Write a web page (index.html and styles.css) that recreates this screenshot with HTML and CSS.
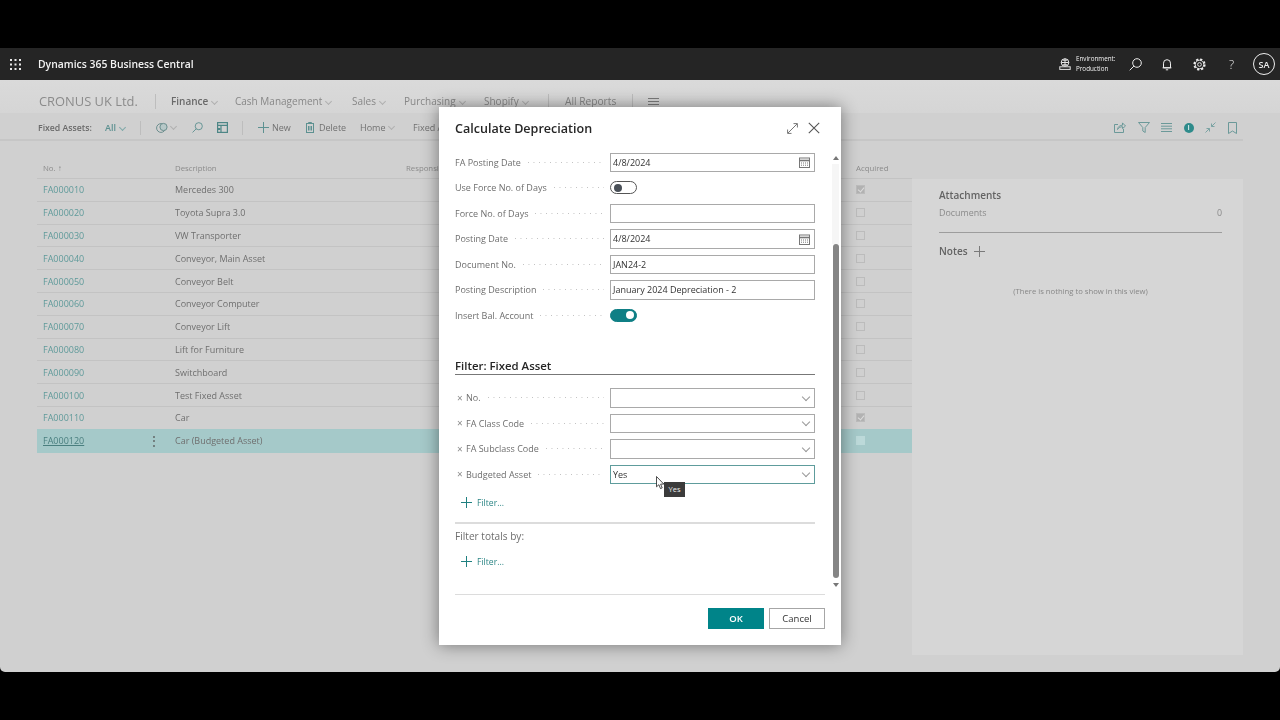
FILE: index.html
```html
<!DOCTYPE html>
<html lang="en">
<head>
<meta charset="utf-8">
<title>Calculate Depreciation</title>
<link rel="stylesheet" href="styles.css">
</head>
<body>
<div class="app">
  <header class="topbar">
    <svg class="waffle" viewBox="0 0 11 11" width="11" height="11"><g fill="#e8e8e8"><rect x="0" y="0" width="2" height="2"/><rect x="4.5" y="0" width="2" height="2"/><rect x="9" y="0" width="2" height="2"/><rect x="0" y="4.5" width="2" height="2"/><rect x="4.5" y="4.5" width="2" height="2"/><rect x="9" y="4.5" width="2" height="2"/><rect x="0" y="9" width="2" height="2"/><rect x="4.5" y="9" width="2" height="2"/><rect x="9" y="9" width="2" height="2"/></g></svg>
    <span class="product">Dynamics 365 Business Central</span>
    <div class="top-right">
      <svg class="env-icon" viewBox="0 0 12 12" width="12" height="12" fill="none" stroke="#e6e6e6" stroke-width="1"><circle cx="6" cy="4.5" r="3.8"/><path d="M2.2 4.5h7.6M6 .7v7.6M3.6 2.2h4.8M3.6 6.8h4.8"/><rect x=".8" y="8.8" width="10.4" height="2.6" fill="#252525"/></svg>
      <div class="env-text"><span>Environment:</span><span>Production</span></div>
      <svg class="ti ti-search" viewBox="0 0 13 13" width="13" height="13" fill="none" stroke="#eee" stroke-width="1"><circle cx="8" cy="5" r="4.3"/><path d="M4.9 8.1.7 12.3"/></svg>
      <svg class="ti ti-bell" viewBox="0 0 12 13" width="12" height="13" fill="none" stroke="#eee" stroke-width="1"><path d="M2.5 9.8V5.2a3.5 3.5 0 0 1 7 0v4.6zM1.6 9.8h8.8M4.8 11.8h2.4"/></svg>
      <svg class="ti ti-gear" viewBox="0 0 14 14" width="13" height="13" fill="none" stroke="#eee"><circle cx="7" cy="7" r="2"/><circle cx="7" cy="7" r="4.6"/><circle cx="7" cy="7" r="5.6" stroke-width="2" stroke-dasharray="2.4 2"/></svg>
      <span class="ti-help">?</span>
      <span class="avatar">SA</span>
    </div>
  </header>

  <nav class="nav">
    <span class="company">CRONUS UK Ltd.</span>
    <i class="vsep vsep-company"></i>
    <span class="nav-item nav-active">Finance<i class="chev"></i></span>
    <span class="nav-item nav-cash">Cash Management<i class="chev"></i></span>
    <span class="nav-item nav-sales">Sales<i class="chev"></i></span>
    <span class="nav-item nav-purch">Purchasing<i class="chev"></i></span>
    <span class="nav-item nav-shop">Shopify<i class="chev"></i></span>
    <i class="vsep vsep-shop"></i>
    <span class="nav-item nav-reports">All Reports</span>
    <i class="vsep vsep-reports"></i>
    <svg class="nav-menu" viewBox="0 0 11 7" width="11" height="7" stroke="#7c7c7c" stroke-width="1"><path d="M0 .5h11M0 3.5h11M0 6.5h11"/></svg>
  </nav>

  <div class="actions">
    <strong class="act-title">Fixed Assets:</strong>
    <span class="act-all">All<i class="chev chev-teal"></i></span>
    <i class="vsep vsep-act1"></i>
    <svg class="act-ic ic-filterpane" viewBox="0 0 12 12" width="12" height="12" fill="none" stroke="#6b8e8e" stroke-width="1"><circle cx="5" cy="6" r="4.4"/><circle cx="7.5" cy="5" r="3.6" fill="#b7c8c8"/></svg>
    <i class="chev chev-gap"></i>
    <svg class="act-ic ic-search" viewBox="0 0 12 12" width="11" height="11" fill="none" stroke="#5d9191" stroke-width="1"><circle cx="7.4" cy="4.6" r="3.9"/><path d="M4.6 7.4.6 11.4"/></svg>
    <svg class="act-ic ic-page" viewBox="0 0 11 11" width="11" height="11" fill="none" stroke="#4d8686" stroke-width="1.2"><rect x=".6" y=".6" width="9.8" height="9.8"/><path d="M.6 3.4h9.8M4 3.4v7" /><path d="M1 7h2.4" stroke-width="2"/></svg>
    <i class="vsep vsep-act2"></i>
    <span class="act-btn act-new"><svg viewBox="0 0 11 11" width="11" height="11" stroke="#5d9191" stroke-width="1"><path d="M5.5 0v11M0 5.5h11"/></svg>New</span>
    <span class="act-btn act-del"><svg viewBox="0 0 8 11" width="8" height="11" fill="none" stroke="#5d9191" stroke-width="1"><rect x=".5" y="1.5" width="7" height="9"/><path d="M2.5 1V.5h3V1M2.5 4v4.5M4 4v4.5M5.5 4v4.5"/></svg>Delete</span>
    <span class="act-btn act-home">Home<i class="chev"></i></span>
    <span class="act-btn act-fixed">Fixed A</span>
    <div class="act-right">
      <svg viewBox="0 0 12 11" width="12" height="11" fill="none" stroke="#6b9999" stroke-width="1"><path d="M4 2.5H.5v8h9V7"/><path d="M3.5 7.5c.5-3 2.5-4.3 5-4.3V.9L11.5 4 8.500 6.600V4.700C6.500 4.700 4.800 5.500 3.500 7.500z"/></svg>
      <svg viewBox="0 0 12 11" width="12" height="11" fill="none" stroke="#6b9999" stroke-width="1"><path d="M.5.500h11L7.200 5.500v5L4.800 9V5.500z"/></svg>
      <svg viewBox="0 0 11 9" width="11" height="9" stroke="#6b9999" stroke-width="1"><path d="M0 .5h11M0 3.200h11M0 5.800h11M0 8.500h11"/></svg>
      <span class="info-dot">i</span>
      <svg viewBox="0 0 11 11" width="11" height="11" fill="none" stroke="#7ba3a3" stroke-width="1"><path d="M6.500 4.500 10.500.5M6.500 1.500v3h3M4.500 6.500.5 10.500M1.500 6.500h3v3"/></svg>
      <svg viewBox="0 0 9 12" width="9" height="12" fill="none" stroke="#6b9999" stroke-width="1"><path d="M.5.500h8v11l-4-2.500-4 2.500z"/></svg>
    </div>
  </div>

  <main class="content">
    <section class="list">
      <div class="row row-head"><span class="c-no">No. <b class="arrow">↑</b></span><span>Description</span><span>Responsi</span><span>Acquired</span></div>
      <div class="row"><a class="c-no">FA000010</a><span>Mercedes 300</span><span></span><i class="cb cb-on"></i></div>
      <div class="row"><a class="c-no">FA000020</a><span>Toyota Supra 3.0</span><span></span><i class="cb"></i></div>
      <div class="row"><a class="c-no">FA000030</a><span>VW Transporter</span><span></span><i class="cb"></i></div>
      <div class="row"><a class="c-no">FA000040</a><span>Conveyor, Main Asset</span><span></span><i class="cb"></i></div>
      <div class="row"><a class="c-no">FA000050</a><span>Conveyor Belt</span><span></span><i class="cb"></i></div>
      <div class="row"><a class="c-no">FA000060</a><span>Conveyor Computer</span><span></span><i class="cb"></i></div>
      <div class="row"><a class="c-no">FA000070</a><span>Conveyor Lift</span><span></span><i class="cb"></i></div>
      <div class="row"><a class="c-no">FA000080</a><span>Lift for Furniture</span><span></span><i class="cb"></i></div>
      <div class="row"><a class="c-no">FA000090</a><span>Switchboard</span><span></span><i class="cb"></i></div>
      <div class="row"><a class="c-no">FA000100</a><span>Test Fixed Asset</span><span></span><i class="cb"></i></div>
      <div class="row"><a class="c-no">FA000110</a><span>Car</span><span></span><i class="cb cb-on"></i></div>
      <div class="row row-sel"><a class="c-no">FA000120<span class="dots">⋮</span></a><span>Car (Budgeted Asset)</span><span></span><i class="cb"></i></div>
    </section>
    <aside class="side">
      <h3 class="side-h">Attachments</h3>
      <div class="side-doc"><span>Documents</span><span>0</span></div>
      <div class="side-notes"><h3 class="side-h">Notes</h3><svg viewBox="0 0 11 11" width="11" height="11" stroke="#7a7a7a" stroke-width="1"><path d="M5.500 0v11M0 5.500h11"/></svg></div>
      <p class="side-empty">(There is nothing to show in this view)</p>
    </aside>
  </main>
</div>

<div class="dialog">
  <div class="dlg-head">
    <h2 class="dlg-title">Calculate Depreciation</h2>
    <svg class="dlg-expand" viewBox="0 0 11 11" width="11" height="11" fill="none" stroke="#777" stroke-width="1"><path d="M.8 10.200 10.200.8M6.500.6h3.900v3.900M.6 6.500v3.900h3.900"/></svg>
    <svg class="dlg-close" viewBox="0 0 12 12" width="12" height="12" stroke="#555" stroke-width="1.100"><path d="M.8.800l10.400 10.400M11.200.800.800 11.200"/></svg>
  </div>
  <div class="dlg-body">
    <div class="form">
      <div class="fld"><label class="lbl"><span>FA Posting Date</span><i class="lead"></i></label><div class="inp">4/8/2024<svg class="cal" viewBox="0 0 11 11" width="11" height="11" fill="none" stroke="#777"><rect x=".5" y="1" width="10" height="9.500"/><path d="M.5 3.500h10" stroke-width="1.600"/><path d="M2 6h7M2 8.200h7" stroke-dasharray="1 1"/></svg></div></div>
      <div class="fld"><label class="lbl"><span>Use Force No. of Days</span><i class="lead"></i></label><span class="tog"><i></i></span></div>
      <div class="fld"><label class="lbl"><span>Force No. of Days</span><i class="lead"></i></label><div class="inp"></div></div>
      <div class="fld"><label class="lbl"><span>Posting Date</span><i class="lead"></i></label><div class="inp">4/8/2024<svg class="cal" viewBox="0 0 11 11" width="11" height="11" fill="none" stroke="#777"><rect x=".5" y="1" width="10" height="9.500"/><path d="M.5 3.500h10" stroke-width="1.600"/><path d="M2 6h7M2 8.200h7" stroke-dasharray="1 1"/></svg></div></div>
      <div class="fld"><label class="lbl"><span>Document No.</span><i class="lead"></i></label><div class="inp">JAN24-2</div></div>
      <div class="fld"><label class="lbl"><span>Posting Description</span><i class="lead"></i></label><div class="inp">January 2024 Depreciation - 2</div></div>
      <div class="fld"><label class="lbl"><span>Insert Bal. Account</span><i class="lead"></i></label><span class="tog tog-on"><i></i></span></div>

      <h3 class="filter-h">Filter: Fixed Asset</h3>
      <div class="fld"><label class="lbl"><em class="x">×</em><span>No.</span><i class="lead"></i></label><div class="inp"><i class="chev chev-inp"></i></div></div>
      <div class="fld"><label class="lbl"><em class="x">×</em><span>FA Class Code</span><i class="lead"></i></label><div class="inp"><i class="chev chev-inp"></i></div></div>
      <div class="fld"><label class="lbl"><em class="x">×</em><span>FA Subclass Code</span><i class="lead"></i></label><div class="inp"><i class="chev chev-inp"></i></div></div>
      <div class="fld"><label class="lbl"><em class="x">×</em><span>Budgeted Asset</span><i class="lead"></i></label><div class="inp inp-focus">Yes<i class="chev chev-inp"></i>
        <span class="tip">Yes</span>
        <svg class="cursor" viewBox="0 0 9 14" width="9" height="14"><path d="M.5.500v10.300l2.400-2.100 1.600 3.900 1.700-.7-1.600-3.800h3.200z" fill="#fff" stroke="#222" stroke-width=".8"/></svg>
      </div></div>
      <div class="add-filter add-1"><svg viewBox="0 0 11 11" width="11" height="11" stroke="#1f8080" stroke-width="1"><path d="M5.500 0v11M0 5.500h11"/></svg>Filter...</div>
      <hr class="form-div">
      <div class="totals">Filter totals by:</div>
      <div class="add-filter add-2"><svg viewBox="0 0 11 11" width="11" height="11" stroke="#1f8080" stroke-width="1"><path d="M5.500 0v11M0 5.500h11"/></svg>Filter...</div>
    </div>
    <div class="scroll">
      <i class="sc-up"></i>
      <i class="sc-track"></i>
      <i class="sc-thumb"></i>
      <i class="sc-down"></i>
    </div>
  </div>
  <div class="dlg-foot">
    <button class="btn btn-ok">OK</button>
    <button class="btn">Cancel</button>
  </div>
</div>
</body>
</html>
```

FILE: styles.css
```css
* { box-sizing: border-box; }
html, body { margin: 0; height: 720px; overflow: hidden; }
body { background: #000; font-family: "Open Sans", "Liberation Sans", sans-serif; font-size: 9px; color: #6c6c6c; position: relative; }
i, em { font-style: normal; }
svg { display: block; flex: none; }

.app { margin-top: 48px; position: absolute; left: 0; right: 0; top: 0; height: 624px; background: #d0d0d0; border-radius: 0 0 5px 5px; display: flex; flex-direction: column; overflow: hidden; filter: blur(.35px); }

.topbar { height: 32px; flex: none; background: #252525; display: flex; align-items: center; padding-left: 10px; color: #f2f2f2; }
.waffle { margin: 0 16px 0 0; }
.product { font-size: 10.4px; font-weight: 600; margin-left: 1px; }
.top-right { margin-left: auto; display: flex; align-items: center; padding-right: 5px; }
.env-icon { margin-right: 5px; }
.env-text { display: flex; flex-direction: column; font-size: 6.3px; line-height: 10px; width: 53px; }
.ti-bell { margin-left: 19px; }
.ti-gear { margin-left: 20px; }
.ti-search { margin-left: 0; }
.ti-help { width: 13px; margin-left: 19px; text-align: center; font-size: 12px; color: #eee; font-weight: 300; }
.avatar { width: 22px; height: 22px; margin-left: 15px; border: 1px solid #eee; border-radius: 50%; display: flex; align-items: center; justify-content: center; font-size: 9px; font-weight: 600; color: #eee; }

.chev { display: inline-block; width: 5px; height: 5px; border-right: 1px solid #b0b0b0; border-bottom: 1px solid #b0b0b0; transform: rotate(45deg); margin: 0 0 2px 4px; vertical-align: middle; }
.chev-teal { border-color: #7fa9a9; }
.vsep { display: block; width: 1px; height: 15px; background: #bdbdbd; flex: none; }

.nav { height: 33px; flex: none; background: linear-gradient(#dadada, #d5d5d5); display: flex; align-items: center; padding-left: 39px; padding-top: 9px; font-size: 10px; color: #878787; }
.company { font-size: 12.900px; color: #8b8b8b; width: 116px; white-space: nowrap; }
.vsep-company { margin-right: 15px; }
.nav-item { white-space: nowrap; }
.nav-active { font-weight: 600; color: #6a6a6a; width: 64px; }
.nav-cash { width: 117px; }
.nav-sales { width: 52px; }
.nav-purch { width: 80px; }
.nav-shop { width: 64px; }
.vsep-shop { margin-right: 16px; }
.nav-reports { width: 67px; font-size: 10.200px; }
.nav-menu { margin-left: 15px; }

.actions { height: 28px; flex: none; margin-right: 37px; padding: 3px 0 0 38px; display: flex; align-items: center; border-bottom: 2px solid #c6c6c6; font-size: 9px; color: #717171; }
.act-title { font-weight: 600; font-size: 8.700px; width: 67px; white-space: nowrap; color: #6a6a6a; }
.act-all { color: #5d9191; font-weight: 600; width: 35px; }
.ic-filterpane { margin-left: 15px; }
.chev-gap { margin: 0 0 2px 3px; }
.ic-search { margin-left: 16px; }
.ic-page { margin-left: 14px; }
.vsep-act1 { height: 14px; }
.vsep-act2 { height: 14px; margin-left: 14px; }
.act-btn { display: inline-flex; align-items: center; white-space: nowrap; }
.act-new { margin-left: 15px; gap: 3px; width: 48px; }
.act-del { gap: 5px; width: 54px; }
.act-home { width: 53px; }
.act-right { margin-left: auto; display: flex; align-items: center; gap: 11.500px; padding-right: 6.500px; }
.info-dot { width: 10px; height: 10px; border-radius: 50%; background: #2e8b8b; color: #d0e6e6; font-size: 7px; line-height: 10px; text-align: center; font-weight: 700; }

.content { flex: 1; display: flex; padding: 0 37px 17px; min-height: 0; }
.list { width: 875px; flex: none; }
.row { display: grid; grid-template-columns: 138px 231px 1fr 56px; height: 22.800px; align-items: center; border-bottom: 1px solid #c3c3c3; font-size: 9px; color: #6f6f6f; }
.row-head { height: 38px; padding-top: 16px; font-size: 7.800px; color: #8b8b8b; border-bottom-color: #c3c3c3; }
.arrow { font-weight: 400; font-size: 8px; }
.c-no { padding-left: 6px; color: #5f9a9a; position: relative; }
.row-head .c-no { color: #8b8b8b; }
.row-sel { background: #a5c9c9; border-bottom-color: #a5c9c9; margin-top: -1px; height: 23.800px; }
.row-sel .c-no { color: #4a7f7f; text-decoration: underline; }
.row-sel .dots { position: absolute; left: 111px; top: -2px; font-size: 12px; color: #555; display: inline-block; }
.cb { display: block; width: 9px; height: 9px; border: 1px solid #bcbcbc; position: relative; }
.cb-on { background: #b2b2b2; }
.cb-on::after { content: ""; position: absolute; left: 2px; top: 0; width: 3px; height: 5px; border-right: 1px solid #dcdcdc; border-bottom: 1px solid #dcdcdc; transform: rotate(40deg); }
.row-sel .cb { background: #bcd9d9; border-color: #bcd9d9; }
.side { width: 331px; flex: none; margin-top: 38px; background: #d6d6d6; padding: 0 21px 0 27px; }
.side-h { margin: 0; font-size: 10px; font-weight: 600; color: #636363; line-height: 14px; }
.side > .side-h { margin-top: 9px; }
.side-doc { display: flex; justify-content: space-between; padding-top: 4px; border-bottom: 1px solid #9d9d9d; font-size: 8.900px; color: #8a8a8a; height: 31px; }
.side-notes { display: flex; align-items: center; gap: 6px; margin-top: 11px; }
.side-empty { margin: 28px 0 0; text-align: center; font-size: 7.700px; color: #878787; }

/* dialog */
.dialog { position: absolute; left: 439px; top: 107px; width: 402px; height: 538px; background: #fff; box-shadow: 0 0 16px rgba(0,0,0,.45); display: flex; flex-direction: column; filter: blur(.2px); }
.dlg-head { height: 42.500px; flex: none; display: flex; align-items: center; padding: 0 21px 0 16px; }
.dlg-title { margin: 0; font-size: 12.550px; font-weight: 600; color: #262626; flex: 1; }
.dlg-close { margin-left: 10px; }
.dlg-body { height: 444.500px; flex: none; display: flex; padding-left: 16px; }
.form { width: 360px; flex: none; }
.fld { display: grid; grid-template-columns: 155px 205px; height: 25.500px; align-items: center; }
.lbl { display: flex; align-items: center; color: #6e6e6e; padding-right: 6px; white-space: nowrap; }
.lead { flex: 1; height: 1px; margin-left: 7px; background: linear-gradient(to right, #c0c0c0 1px, transparent 1px) 0 0 / 5.500px 1px repeat-x; }
.x { width: 11px; color: #8a8a8a; font-size: 10px; line-height: 10px; text-align: left; padding-left: 2px; flex: none; }
.inp { height: 19.500px; border: 1px solid #a9a9a9; padding: 1px 0 0 2px; line-height: 16px; color: #333; display: flex; align-items: center; position: relative; }
.inp-focus { border-color: #5e9c9c; }
.cal { position: absolute; right: 4.500px; top: 3.500px; }
.chev-inp { position: absolute; right: 5px; top: 4.500px; margin: 0; width: 6px; height: 6px; border-color: #999; }
.tog { display: block; width: 27px; height: 13px; border: 1px solid #555; border-radius: 7px; padding: 1.500px 0 0 3px; }
.tog i { display: block; width: 8px; height: 8px; background: #4a5058; border-radius: 50%; }
.tog-on { background: #0f7f85; border-color: #0f7f85; padding-left: 15px; }
.tog-on i { background: #fff; }
.filter-h { margin: 0 0 10px; height: 47px; padding-top: 30px; border-bottom: 1px solid #777; font-size: 11.400px; font-weight: 600; color: #262626; line-height: 16px; }
.add-filter { height: 30px; display: flex; align-items: center; gap: 5px; padding-left: 6px; color: #2b8585; font-size: 8.600px; }
.add-1 { padding-top: 1.500px; }
.form-div { margin: 5px 0 0; height: 2px; border: 0; background: #dcdcdc; }
.totals { height: 24px; display: flex; align-items: center; color: #6e6e6e; font-size: 10.100px; }
.add-2 { height: 27px; }
.scroll { margin-left: 17px; width: 7px; padding-top: 6.500px; display: flex; flex-direction: column; align-items: center; }
.sc-up, .sc-down { width: 0; height: 0; border-left: 3.500px solid transparent; border-right: 3.500px solid transparent; }
.sc-up { border-bottom: 4px solid #777; margin: 0 0 4px; }
.sc-down { border-top: 4px solid #777; margin-top: 5px; }
.sc-track { width: 7px; height: 80px; background: #f6f6f6; }
.sc-thumb { width: 6px; height: 334px; background: #858585; border-radius: 3px; }
.dlg-foot { flex: 1; margin: 0 16px 0 16px; border-top: 1px solid #dcdcdc; display: flex; justify-content: flex-end; align-items: flex-start; gap: 5px; padding-top: 13px; }
.btn { width: 56px; height: 21px; padding: 0; background: #fff; border: 1px solid #a6a6a6; font: inherit; font-size: 9.500px; color: #333; }
.btn-ok { background: #008489; border-color: #008489; color: #fff; font-weight: 600; }
.tip { position: absolute; left: 53px; top: 16px; width: 21px; height: 15px; background: #3b3b3b; color: #eee; font-size: 7.500px; line-height: 15px; text-align: center; z-index: 2; }
.cursor { position: absolute; left: 45px; top: 10px; z-index: 3; }
```
